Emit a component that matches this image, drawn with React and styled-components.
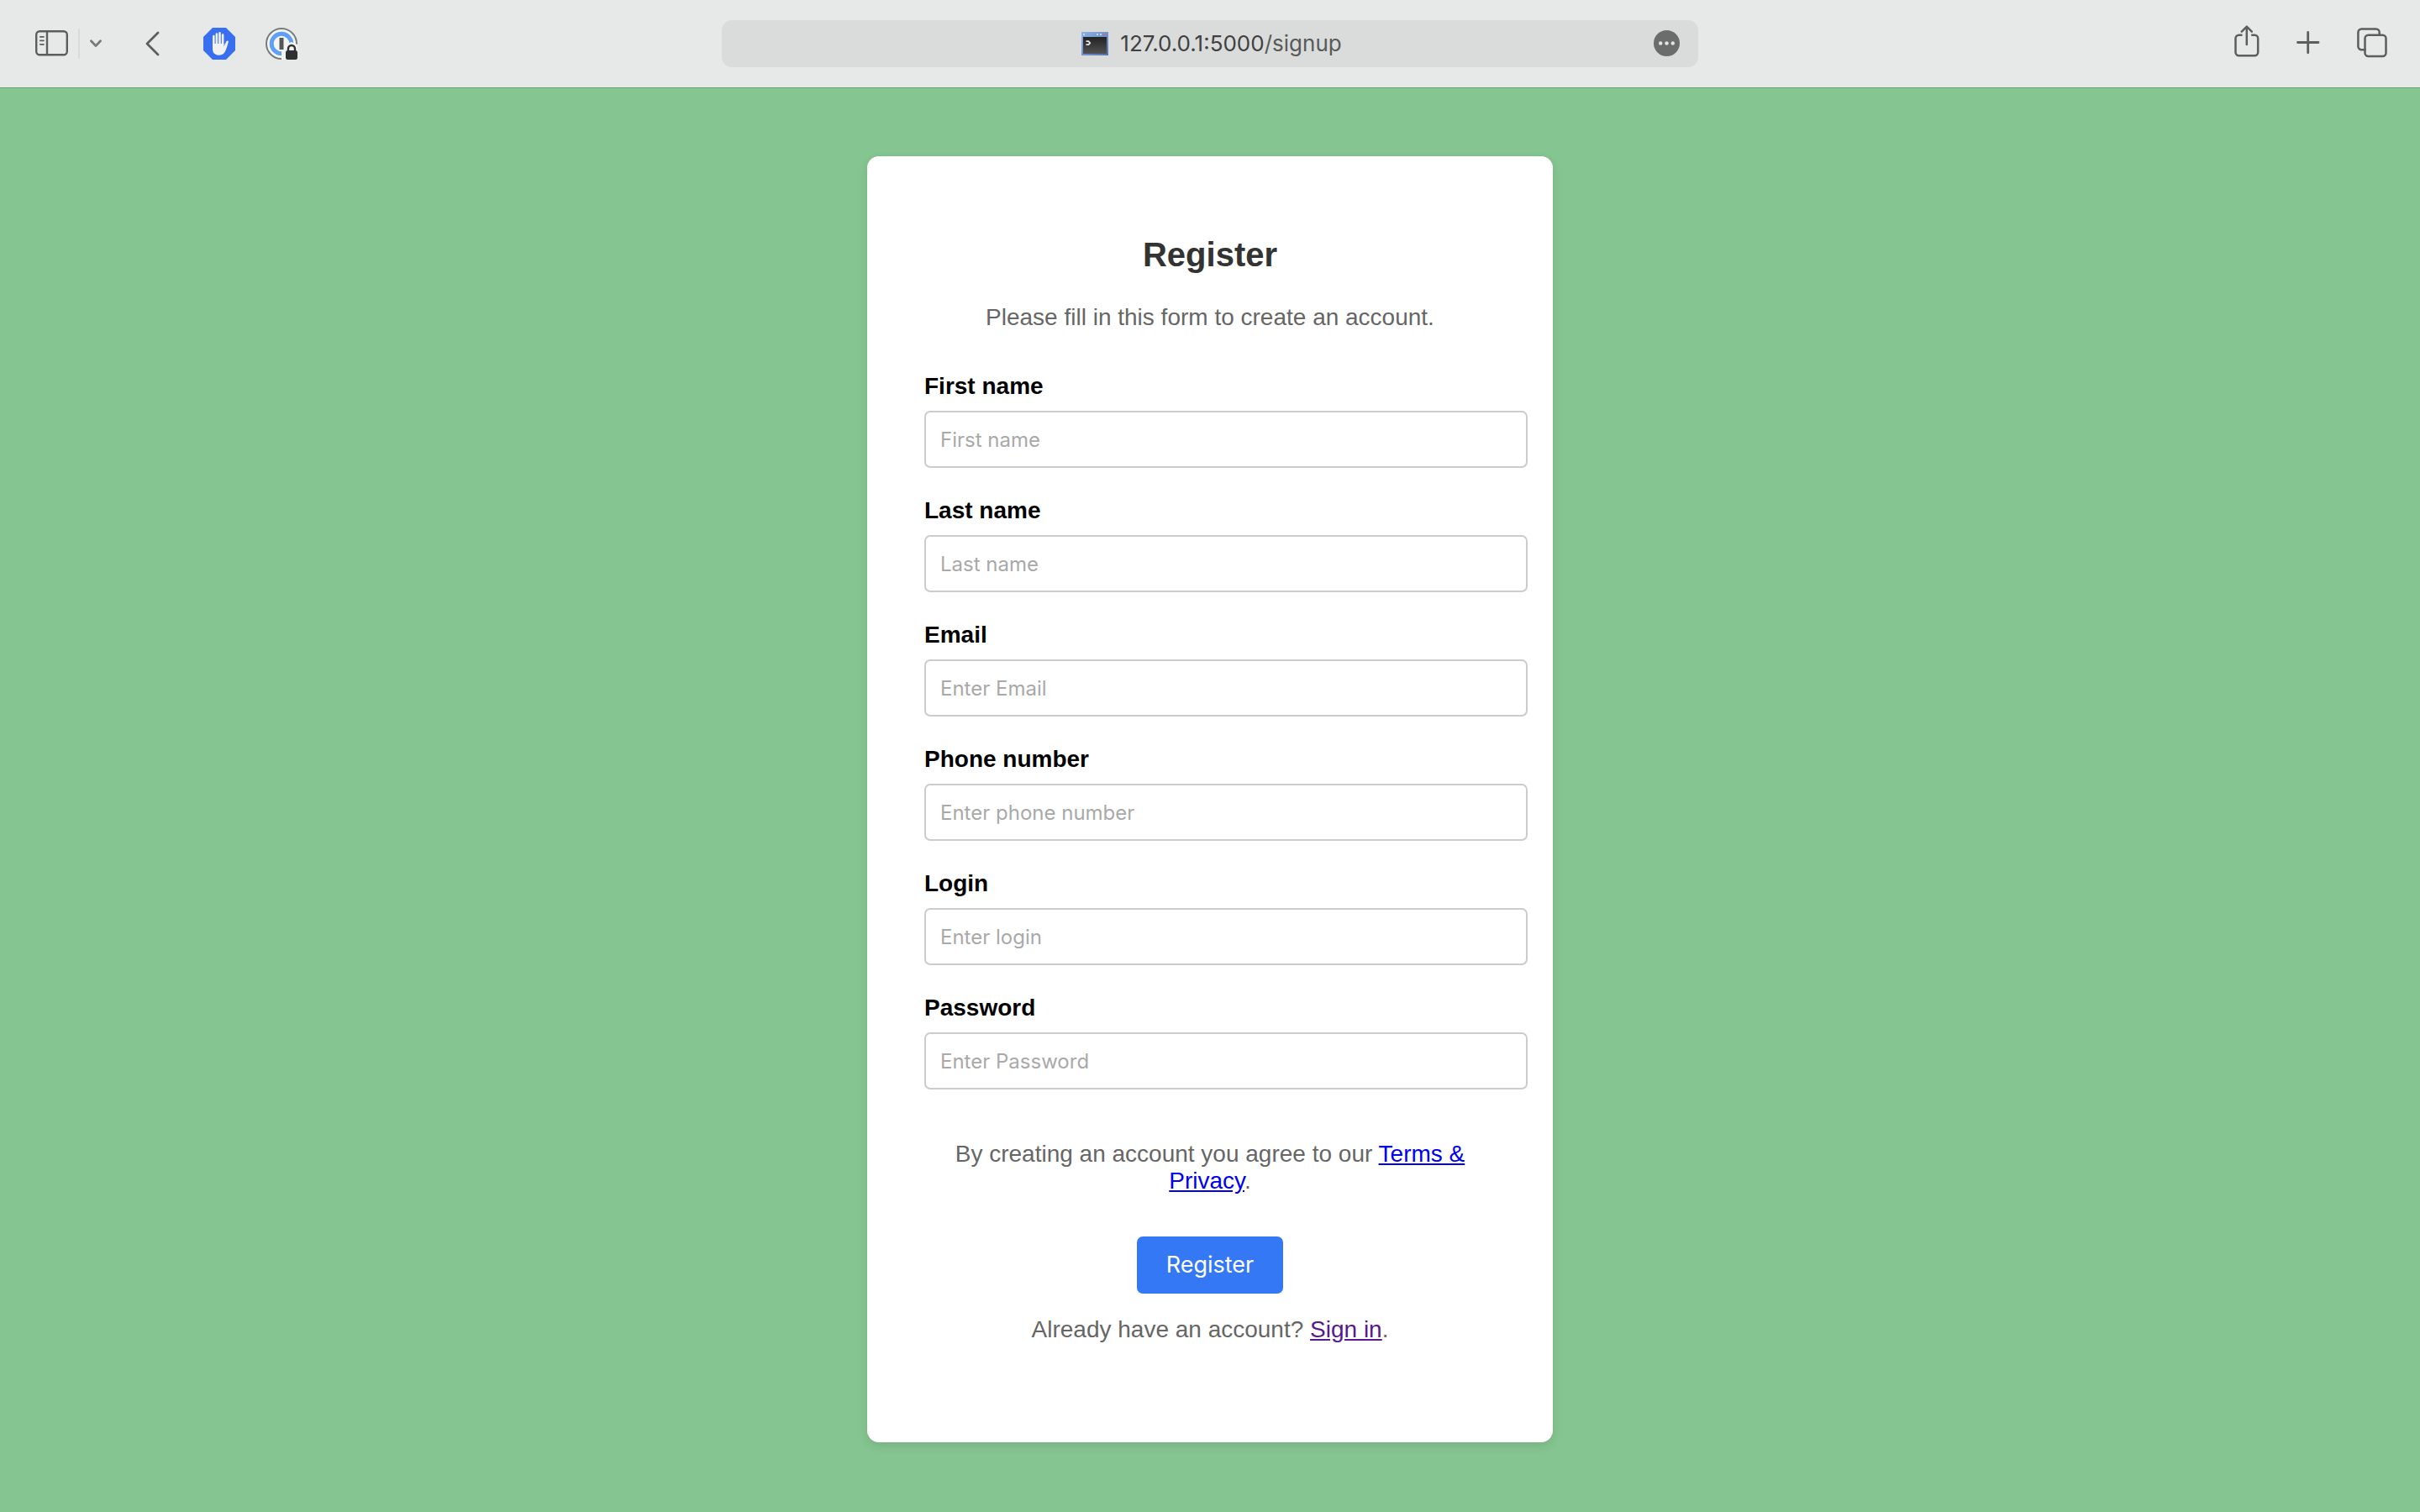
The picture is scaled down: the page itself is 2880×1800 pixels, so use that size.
import React from 'react';
import styled, { createGlobalStyle } from 'styled-components';

const GlobalStyle = createGlobalStyle`
  *, *::before, *::after { box-sizing: border-box; }
  html, body, #root { min-height: 100vh; }
  body {
    margin: 0;
    background: #85c591;
    font-family: "Liberation Sans", Arial, sans-serif;
  }
`;

const Window = styled.div`
  display: flex;
  flex-direction: column;
  min-height: 100vh;
`;

const Toolbar = styled.header`
  display: grid;
  grid-template-columns: 1fr minmax(0, 1162px) 1fr;
  align-items: center;
  padding: 24px 39px;
  background: #e7e9e8;
  border-bottom: 1px solid #5fa56d;
`;

const ToolGroup = styled.div`
  display: flex;
  align-items: center;
  justify-content: ${(p) => (p.$end ? 'flex-end' : 'flex-start')};
  gap: ${(p) => p.$gap}px;
`;

const ToolButton = styled.button`
  display: flex;
  padding: 0;
  border: 0;
  background: none;
  color: #5c5e5d;

  svg { display: block; }
`;

const Divider = styled.span`
  width: 2px;
  height: 36px;
  background: #dadcdb;
`;

const AddressBar = styled.div`
  display: grid;
  grid-template-columns: 1fr auto 1fr;
  align-items: center;
  height: 56px;
  padding: 0 22px 0 26px;
  border-radius: 12px;
  background: #dadcdb;
`;

const Address = styled.div`
  grid-column: 2;
  display: flex;
  align-items: center;
  gap: 14px;
  font: 26px/32px Inter, sans-serif;
  color: #3f4140;
`;

const Path = styled.span`
  color: #585a59;
`;

const MoreSlot = styled.div`
  justify-self: end;
`;

const Page = styled.main`
  flex: 1;
  display: flex;
  justify-content: center;
  align-items: flex-start;
  padding: 81px 24px;
`;

const Card = styled.form`
  display: flex;
  flex-direction: column;
  align-items: center;
  width: 816px;
  padding: 94px 68px 118px;
  border-radius: 14px;
  background: #fff;
  box-shadow: 0 4px 12px rgba(0, 0, 0, 0.1);
`;

const Title = styled.h1`
  margin: 0 0 36px;
  font-size: 40px;
  line-height: 46px;
  color: #333;
`;

const Text = styled.p`
  margin: 0;
  font-size: 28px;
  line-height: 32px;
  text-align: center;
  color: #666;
`;

const Fields = styled.div`
  align-self: stretch;
  display: flex;
  flex-direction: column;
  gap: 35px;
  margin: 50px -38px 61px 0;
`;

const Field = styled.div`
  display: flex;
  flex-direction: column;
  gap: 13px;
`;

const Label = styled.label`
  font-size: 28px;
  font-weight: bold;
  line-height: 32px;
  color: #000;
`;

const Input = styled.input`
  width: 100%;
  height: 68px;
  padding: 0 17px;
  border: 2px solid #ccc;
  border-radius: 7px;
  background: #fff;
  font: 24px/30px Inter, sans-serif;
  color: #000;

  &::placeholder { color: #a9a9a9; opacity: 1; }
`;

const Link = styled.a`
  color: ${(p) => (p.$visited ? '#551a8b' : '#0000ee')};
  text-decoration: underline;
`;

const Submit = styled.button`
  height: 68px;
  margin: 50px 0 27px;
  padding: 0 35px;
  border: 0;
  border-radius: 7px;
  background: #3478f6;
  font: 27px/32px Inter, sans-serif;
  color: #fff;
`;

const stroke = { fill: 'none', stroke: 'currentColor', strokeLinecap: 'round', strokeLinejoin: 'round' };

const SidebarIcon = () => (
  <svg width="42" height="32" viewBox="-3 1 42 32" {...stroke} strokeWidth="2.4">
    <rect x="1.2" y="2.2" width="36.6" height="28" rx="4" />
    <path d="M14 2.500v27.5" />
    <path d="M5.8 8.8h4.2M5.8 13.300h4.2M5.8 17.800h4.2" strokeWidth="1.7" />
  </svg>
);

const ChevronIcon = () => (
  <svg width="14" height="10" viewBox="0 0 14 10" {...stroke} stroke="#77797d" strokeWidth="2.8">
    <path d="M1.5 1.7 7 7.6l5.500-5.900" />
  </svg>
);

const BackIcon = () => (
  <svg width="17" height="30" viewBox="0 0 17 30" {...stroke} strokeWidth="2.8">
    <path d="M15 2 2 15l13 13" />
  </svg>
);

const HandIcon = () => (
  <svg width="38" height="38" viewBox="0 0 38 38">
    <path d="M11 0h16l11 11v16L27 38H11L0 27V11z" fill="#386ef0" />
    <g stroke="#f1f1f1" strokeWidth="2.600" strokeLinecap="round" fill="none">
      <path d="M12.300 21V10M15.900 20V7.500M19.500 20V6.300M23.100 21V8.500" />
    </g>
    <path d="M11 19h13.400v3.500c1-2 2-4.300 3-6.200.6-1.200 2.800-.9 2.400.8-.9 3.400-1.900 6.600-3.100 9.700-1.400 3.900-4 6-8 6-5 0-7.700-3-7.700-7.800z" fill="#f1f1f1" />
  </svg>
);

const VaultIcon = () => (
  <svg width="38" height="38" viewBox="0 0 38 38">
    <circle cx="19" cy="19" r="18" fill="#f4f5f5" stroke="#7a7c7b" strokeWidth="2" />
    <circle cx="19" cy="19" r="11.800" fill="#f4f5f5" stroke="#5f9ff8" strokeWidth="5" />
    <rect x="16.500" y="12" width="5" height="14" fill="#555756" />
    <path d="M19 38V27h4l2-8 6-2 7 3v18z" fill="#f1f2f2" />
    <rect x="24" y="27" width="14" height="11" rx="2.500" fill="#303030" />
    <path d="M27 28v-3a4 4 0 0 1 8 0v3" fill="none" stroke="#303030" strokeWidth="2.400" />
  </svg>
);

const TerminalIcon = () => (
  <svg width="32" height="28" viewBox="0 0 32 28">
    <defs>
      <linearGradient id="frame" x2="1" y2="1">
        <stop stopColor="#8db2e6" />
        <stop offset="1" stopColor="#5373b4" />
      </linearGradient>
      <linearGradient id="screen" x2="0" y2="1">
        <stop stopColor="#222" />
        <stop offset="1" stopColor="#525252" />
      </linearGradient>
    </defs>
    <rect width="32" height="28" fill="url(#frame)" />
    <rect x="2" y="6" width="28" height="20" fill="url(#screen)" />
    <path d="M2 2h2v2H2zM18 2h2v2h-2zM22 2h2v2h-2z" fill="#c4d7f2" />
    <path d="M26 2h2v2h-2z" fill="#e0646a" />
    <path d="M5.500 11.200h3l1.700 2-1.700 2h-3" fill="none" stroke="#e4e4e4" strokeWidth="1.800" />
  </svg>
);

const MoreIcon = () => (
  <svg width="31" height="33" viewBox="0 0 31 33">
    <circle cx="15.500" cy="15.500" r="15.500" fill="#6b6d6c" />
    <g fill="#e3e5e4">
      <circle cx="8.200" cy="15.500" r="2.200" />
      <circle cx="15.500" cy="15.500" r="2.200" />
      <circle cx="22.800" cy="15.500" r="2.200" />
    </g>
  </svg>
);

const ShareIcon = () => (
  <svg width="30" height="44" viewBox="0 3 30 44" {...stroke} strokeWidth="2.500">
    <path d="M9.500 14.800H5.500a4 4 0 0 0-4 4v16.400a4 4 0 0 0 4 4h18.700a4 4 0 0 0 4-4V18.800a4 4 0 0 0-4-4H20.200" strokeLinecap="butt" />
    <path d="M14.800 26V5.500M8.800 10.700l6-6 6 6" />
  </svg>
);

const PlusIcon = () => (
  <svg width="28" height="30" viewBox="0 0 28 30" {...stroke} strokeWidth="2.800">
    <path d="M1.500 13.500h24.500M13.700 1.400v24.400" />
  </svg>
);

const TabsIcon = () => (
  <svg width="36" height="38" viewBox="0 1 36 38" {...stroke} strokeWidth="2.500">
    <rect x="9.500" y="9.800" width="25" height="25.300" rx="4" />
    <path d="M9.500 27.200H5.400a4 4 0 0 1-4-4V6.500a4 4 0 0 1 4-4h17.300a4 4 0 0 1 4 4v3.300" />
  </svg>
);

const FIELDS = [
  { id: 'first-name', label: 'First name', placeholder: 'First name', type: 'text' },
  { id: 'last-name', label: 'Last name', placeholder: 'Last name', type: 'text' },
  { id: 'email', label: 'Email', placeholder: 'Enter Email', type: 'email' },
  { id: 'phone', label: 'Phone number', placeholder: 'Enter phone number', type: 'tel' },
  { id: 'login', label: 'Login', placeholder: 'Enter login', type: 'text' },
  { id: 'password', label: 'Password', placeholder: 'Enter Password', type: 'password' },
];

export default function App() {
  return (
    <Window>
      <GlobalStyle />
      <Toolbar>
        <ToolGroup $gap={52}>
          <ToolGroup $gap={12}>
            <ToolButton type="button" aria-label="Sidebar"><SidebarIcon /></ToolButton>
            <Divider />
            <ToolButton type="button" aria-label="Tab groups"><ChevronIcon /></ToolButton>
          </ToolGroup>
          <ToolButton type="button" aria-label="Back"><BackIcon /></ToolButton>
          <ToolGroup $gap={36}>
            <ToolButton type="button" aria-label="Content blocker"><HandIcon /></ToolButton>
            <ToolButton type="button" aria-label="Password manager"><VaultIcon /></ToolButton>
          </ToolGroup>
        </ToolGroup>
        <AddressBar>
          <Address>
            <TerminalIcon />
            <span>127.0.0.1:5000<Path>/signup</Path></span>
          </Address>
          <MoreSlot>
            <ToolButton type="button" aria-label="More"><MoreIcon /></ToolButton>
          </MoreSlot>
        </AddressBar>
        <ToolGroup $end $gap={44}>
          <ToolButton type="button" aria-label="Share"><ShareIcon /></ToolButton>
          <ToolButton type="button" aria-label="New tab"><PlusIcon /></ToolButton>
          <ToolButton type="button" aria-label="Tab overview"><TabsIcon /></ToolButton>
        </ToolGroup>
      </Toolbar>
      <Page>
        <Card onSubmit={(e) => e.preventDefault()}>
          <Title>Register</Title>
          <Text>Please fill in this form to create an account.</Text>
          <Fields>
            {FIELDS.map((f) => (
              <Field key={f.id}>
                <Label htmlFor={f.id}>{f.label}</Label>
                <Input id={f.id} name={f.id} type={f.type} placeholder={f.placeholder} />
              </Field>
            ))}
          </Fields>
          <Text>
            By creating an account you agree to our <Link href="#terms">Terms &amp; Privacy</Link>.
          </Text>
          <Submit type="submit">Register</Submit>
          <Text>
            Already have an account? <Link href="#signin" $visited>Sign in</Link>.
          </Text>
        </Card>
      </Page>
    </Window>
  );
}
